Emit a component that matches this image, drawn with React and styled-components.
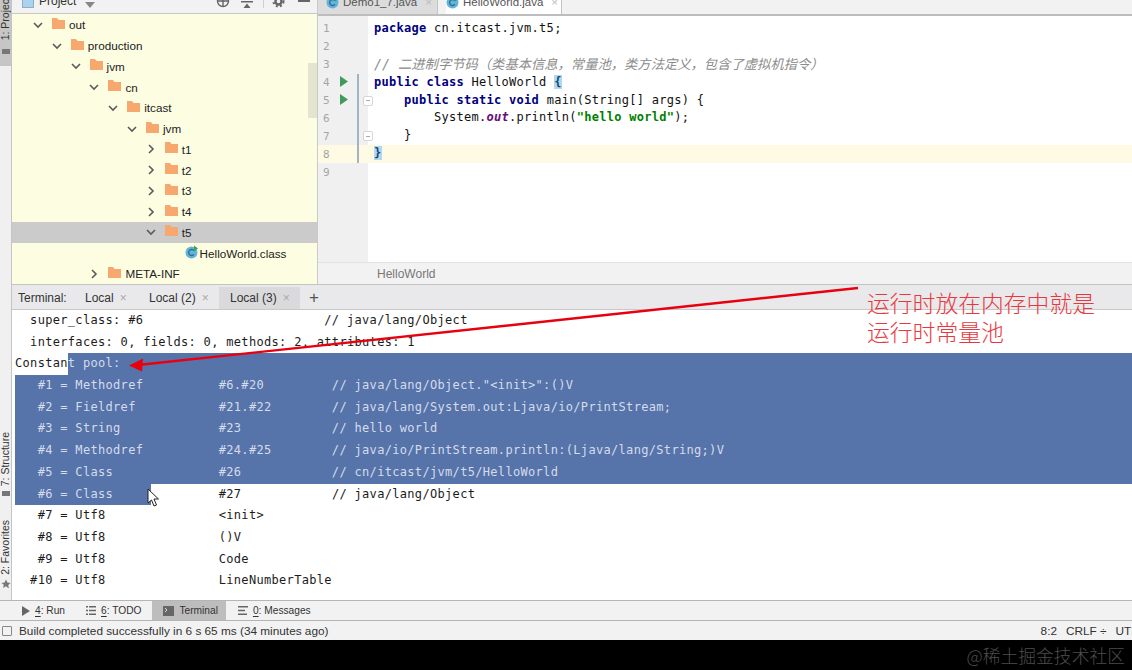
import React from 'react';
import styled, { createGlobalStyle } from 'styled-components';

const GlobalStyle = createGlobalStyle`
  html, body { margin: 0; padding: 0; background: #000; overflow: hidden; }
  * { box-sizing: border-box; }
`;

const uiFont = `"Liberation Sans", Arial, sans-serif`;
const monoFont = `"DejaVu Sans Mono", "Noto Sans CJK SC", monospace`;

const Page = styled.div`
  position: relative;
  width: 1132px;
  height: 670px;
  overflow: hidden;
  display: flex;
  flex-direction: column;
  font-family: ${uiFont};
  color: #222;
`;

const Workspace = styled.div`
  display: flex;
  height: 600px;
  background: #f2f2f2;
`;

const Stripe = styled.div`
  width: 12px;
  flex: none;
  display: flex;
  flex-direction: column;
  align-items: center;
  background: #f0f0f0;
  border-right: 1px solid #c4c4c4;
  font-size: 10.5px;
  color: #333;
  overflow: hidden;
`;

const StripeButton = styled.div`
  display: flex;
  flex-direction: column;
  align-items: center;
  width: 100%;
  height: ${(p) => p.$h}px;
  margin-top: ${(p) => p.$top || 0}px;
  justify-content: flex-end;
  background: ${(p) => (p.$active ? '#c6c6c6' : 'transparent')};
  padding-bottom: ${(p) => p.$pad || 0}px;
`;

const VerticalLabel = styled.span`
  writing-mode: vertical-rl;
  transform: rotate(180deg);
  white-space: nowrap;
  line-height: 11px;
`;

const StripeDot = styled.span`
  width: 8px;
  height: 5px;
  margin-top: ${(p) => p.$gap || 5}px;
  background: #777;
  flex: none;
`;

const Main = styled.div`
  flex: 1;
  min-width: 0;
  display: flex;
  flex-direction: column;
`;

const TopArea = styled.div`
  display: flex;
  height: 284px;
`;

const ProjectPanel = styled.div`
  position: relative;
  width: 306px;
  flex: none;
  display: flex;
  flex-direction: column;
  background: #fdfde2;
  border-right: 1px solid #c9c9c9;
`;

const PanelHeader = styled.div`
  height: 14px;
  flex: none;
  display: flex;
  align-items: flex-end;
  background: #f2f2f2;
  border-bottom: 1px solid #c8c8c8;
  padding: 0 0 5px 10px;
  overflow: hidden;
  font-size: 12px;
`;

const HeaderLabel = styled.span`
  margin-left: 5px;
  line-height: 14px;
  color: #333;
`;

const HeaderCaret = styled.svg`
  margin-left: 9px;
`;

const HeaderTools = styled.div`
  display: flex;
  align-items: flex-end;
  margin-left: auto;
  padding-right: 7px;
`;

const HeaderIcon = styled.svg`
  margin-left: ${(p) => p.$ml || 0}px;
  flex: none;
`;

const HeaderDivider = styled.span`
  width: 1px;
  height: 14px;
  margin-left: 10px;
  background: #cfcfcf;
`;

const Tree = styled.div`
  padding-top: 0.6px;
  font-size: 11.7px;
`;

const TreeRow = styled.div`
  height: 20.75px;
  display: flex;
  align-items: center;
  padding-left: ${(p) => 20 + p.$level * 18.8}px;
  background: ${(p) => (p.$selected ? '#cbcbcb' : 'transparent')};
  color: #222;
`;

const Chevron = styled.svg`
  width: 12px;
  height: 12px;
  margin-right: 8px;
  flex: none;
`;

const LeafGap = styled.span`
  width: 21px;
  flex: none;
`;

const FolderIcon = styled.svg`
  width: 13px;
  height: 11px;
  margin-right: 4px;
  margin-top: -3px;
  flex: none;
`;

const Thumb = styled.div`
  position: absolute;
  top: 63px;
  right: 0;
  width: 9px;
  height: 55px;
  background: #e5e5cf;
`;

const Editor = styled.div`
  flex: 1;
  min-width: 0;
  display: flex;
  flex-direction: column;
  background: #fff;
`;

const TabBar = styled.div`
  height: 16px;
  flex: none;
  display: flex;
  align-items: flex-end;
  background: #f2f2f2;
  border-bottom: 2px solid #bdbdbd;
  overflow: hidden;
  font-size: 11.5px;
`;

const EditorTab = styled.div`
  height: 14px;
  width: ${(p) => p.$w}px;
  margin-left: ${(p) => p.$gap || 0}px;
  display: flex;
  align-items: flex-end;
  padding: 0 0 5px ${(p) => p.$pad}px;
  flex: none;
  color: #555;
  background: ${(p) => (p.$active ? '#fff' : '#dcdcdc')};
  border-right: 1px solid #c4c4c4;
`;

const TabName = styled.span`
  margin-left: 2px;
  line-height: 14px;
  white-space: nowrap;
`;

const TabClose = styled.span`
  margin-left: 8px;
  line-height: 14px;
  color: #bbb;
`;

const CodeArea = styled.div`
  flex: 1;
  display: flex;
  flex-direction: column;
  padding-top: 4px;
  background: linear-gradient(to right, #f0f0f0 50px, #fff 50px);
`;

const CodeRow = styled.div`
  height: 17.9px;
  display: flex;
  background: ${(p) => (p.$current ? '#fffae3' : 'transparent')};
`;

const Gutter = styled.div`
  position: relative;
  width: 50px;
  flex: none;
  display: flex;
  align-items: center;
  font: 11px ${monoFont};
  color: #a5a5a5;
  padding-left: 5px;
`;

const RunMark = styled.svg`
  position: absolute;
  left: 21px;
  top: 2px;
  width: 10px;
  height: 11px;
`;

const ChangeBar = styled.span`
  position: absolute;
  left: 39px;
  top: 0;
  bottom: 0;
  width: 2px;
  background: #a4b3c4;
`;

const FoldMark = styled.span`
  position: absolute;
  left: 45px;
  top: 4px;
  width: 10px;
  height: 10px;
  border: 1px solid #d6d6d6;
  border-radius: 2px;
  background: #fff;
  &::after {
    content: '';
    position: absolute;
    left: 2px;
    right: 2px;
    top: 3.5px;
    height: 1px;
    background: #aaa;
  }
`;

const Code = styled.pre`
  margin: 0;
  padding-left: 6px;
  font: 12px/17.9px ${monoFont};
  letter-spacing: 0.28px;
  color: #111;
`;

const Keyword = styled.b`
  color: #000080;
`;

const Comment = styled.i`
  color: #8c8c8c;
  font-size: 13.3px;
  letter-spacing: 0;
`;

const StaticField = styled.i`
  color: #660e7a;
  font-weight: bold;
`;

const Str = styled.b`
  color: #008000;
`;

const Brace = styled.span`
  background: #b4d7ee;
  font-weight: bold;
  color: #0b4a78;
`;

const Breadcrumb = styled.div`
  height: 22px;
  flex: none;
  display: flex;
  align-items: center;
  padding-left: 59px;
  background: #f2f2f2;
  border-top: 1px solid #e2e2e2;
  font-size: 12px;
  color: #777;
`;

const TerminalTabs = styled.div`
  height: 26px;
  flex: none;
  display: flex;
  align-items: stretch;
  padding-top: 2px;
  border-top: 1px solid #c4c4c4;
  border-bottom: 1px solid #c8c8c8;
  background: #e9e9ec;
  font-size: 12px;
  color: #333;
`;

const TerminalTitle = styled.span`
  display: flex;
  align-items: center;
  width: 62px;
  margin-left: 6px;
`;

const TerminalTab = styled.span`
  display: flex;
  align-items: center;
  width: ${(p) => p.$w}px;
  padding-left: ${(p) => p.$pad}px;
  background: ${(p) => (p.$active ? '#dadadd' : 'transparent')};
`;

const TabX = styled.span`
  margin-left: 6px;
  color: #aaa;
`;

const AddTab = styled.span`
  display: flex;
  align-items: center;
  margin-left: 9px;
  font-size: 17px;
  color: #555;
`;

const TerminalBody = styled.div`
  flex: 1;
  background: #fff;
  padding-left: 3px;
  overflow: hidden;
  font: 12px/21.7px ${monoFont};
  letter-spacing: 0.32px;
  color: #1c1c1c;
`;

const TermLine = styled.div`
  height: 21.7px;
  display: flex;
  white-space: pre;
`;

const Selected = styled.span`
  background: #5673aa;
  color: #d5dcea;
  flex: ${(p) => (p.$fill ? 1 : 'none')};
`;

const ToolBar = styled.div`
  height: 21px;
  flex: none;
  display: flex;
  align-items: stretch;
  padding-left: 12px;
  background: #f2f2f2;
  border-top: 1px solid #b5b5b5;
  border-bottom: 1px solid #b5b5b5;
  font-size: 10.2px;
  color: #333;
`;

const ToolItem = styled.div`
  display: flex;
  align-items: center;
  gap: 5px;
  padding: 0 ${(p) => p.$pad || 8}px 0 ${(p) => p.$left || 10}px;
  background: ${(p) => (p.$active ? '#bdbdbd' : 'transparent')};
  margin-left: ${(p) => p.$gap || 0}px;
`;

const Mnemonic = styled.u`
  text-underline-offset: 2px;
`;

const StatusBar = styled.div`
  height: 19px;
  flex: none;
  display: flex;
  align-items: center;
  padding-left: 2px;
  background: #f2f2f2;
  font-size: 11.8px;
  color: #333;
  overflow: hidden;
`;

const StatusBox = styled.span`
  width: 10px;
  height: 10px;
  border: 1px solid #888;
  border-radius: 1px;
  margin-right: 7px;
  flex: none;
`;

const StatusRight = styled.div`
  display: flex;
  margin-left: auto;
  margin-right: -17px;
  gap: 9px;
  white-space: nowrap;
`;

const Footer = styled.div`
  flex: 1;
  display: flex;
  justify-content: flex-end;
  align-items: center;
  padding-right: 7px;
  background: #000;
`;

const Watermark = styled.span`
  font: 17.8px "Noto Sans CJK SC", sans-serif;
  font-weight: 300;
  color: #4d4d4d;
`;

const ArrowLayer = styled.svg`
  position: absolute;
  left: 0;
  top: 0;
  pointer-events: none;
`;

const Note = styled.div`
  position: absolute;
  left: 867px;
  top: 288px;
  font: 300 22.8px/29px "Noto Sans CJK SC", sans-serif;
  color: #e8383d;
  white-space: pre;
`;

const Cursor = styled.svg`
  position: absolute;
  left: 147px;
  top: 488px;
`;

const ClassIcon = () => (
  <svg width="14" height="14" viewBox="0 0 14 14" style={{ flex: 'none', marginRight: 1, marginTop: -3 }}>
    <circle cx="6.5" cy="7.5" r="6" fill="#60b5de" />
    <path d="M9 5.6a3 3 0 1 0 0 3.8" fill="none" stroke="#3a6c8c" strokeWidth="1.4" />
    <path d="M9 0.5l4 3-4 3z" fill="#3fa34d" />
  </svg>
);

const treeRows = [
  { name: 'out', level: 0, open: true },
  { name: 'production', level: 1, open: true },
  { name: 'jvm', level: 2, open: true },
  { name: 'cn', level: 3, open: true },
  { name: 'itcast', level: 4, open: true },
  { name: 'jvm', level: 5, open: true },
  { name: 't1', level: 6 },
  { name: 't2', level: 6 },
  { name: 't3', level: 6 },
  { name: 't4', level: 6 },
  { name: 't5', level: 6, open: true, selected: true },
  { name: 'HelloWorld.class', level: 7, file: true },
  { name: 'META-INF', level: 3 },
];

const TreeItem = ({ row }) => (
  <TreeRow $level={row.level} $selected={row.selected}>
    {row.file ? (
      <>
        <LeafGap />
        <ClassIcon />
      </>
    ) : (
      <>
        <Chevron viewBox="0 0 12 12" fill="none" stroke="#5a5a5a" strokeWidth="1.6">
          <path d={row.open ? 'M2 4l4 4 4-4' : 'M4 2l4 4-4 4'} />
        </Chevron>
        <FolderIcon viewBox="0 0 13 11">
          <path d="M0 0h5l1.5 2H13v9H0z" fill="#f6a86e" />
        </FolderIcon>
      </>
    )}
    <span>{row.name}</span>
  </TreeRow>
);

const RunIcon = () => (
  <RunMark viewBox="0 0 10 11">
    <path d="M1 0l8 5.5L1 11z" fill="#3f9a5b" />
  </RunMark>
);

const codeLines = [
  { code: <><Keyword>package</Keyword> cn.itcast.jvm.t5;</> },
  { code: '' },
  { code: <Comment>{'// 二进制字节码（类基本信息，常量池，类方法定义，包含了虚拟机指令）'}</Comment> },
  { run: true, bar: true, code: <><Keyword>public class</Keyword> HelloWorld <Brace>{'{'}</Brace></> },
  { run: true, bar: true, fold: true, code: <>    <Keyword>public static void</Keyword> main(String[] args) {'{'}</> },
  { bar: true, code: <>        System.<StaticField>out</StaticField>.println(<Str>"hello world"</Str>);</> },
  { bar: true, fold: true, code: '    }' },
  { bar: true, current: true, code: <Brace>{'}'}</Brace> },
  { code: '' },
];

// javap output, the columns are plain spaces as in the real terminal
const plainBefore = [
  '  super_class: #6                        // java/lang/Object',
  '  interfaces: 0, fields: 0, methods: 2, attributes: 1',
];

const selectedLines = [
  '   #1 = Methodref          #6.#20         // java/lang/Object."<init>":()V',
  '   #2 = Fieldref           #21.#22        // java/lang/System.out:Ljava/io/PrintStream;',
  '   #3 = String             #23            // hello world',
  '   #4 = Methodref          #24.#25        // java/io/PrintStream.println:(Ljava/lang/String;)V',
  '   #5 = Class              #26            // cn/itcast/jvm/t5/HelloWorld',
];

const plainAfter = [
  '   #7 = Utf8               <init>',
  '   #8 = Utf8               ()V',
  '   #9 = Utf8               Code',
  '  #10 = Utf8               LineNumberTable',
];

export default function App() {
  return (
    <Page>
      <GlobalStyle />
      <Workspace>
        <Stripe>
          <StripeButton $active $h={66} $pad={12}>
            <VerticalLabel>1: Project</VerticalLabel>
            <StripeDot $gap={9} />
          </StripeButton>
          <StripeButton $h={74} $top={356}>
            <VerticalLabel>7: Structure</VerticalLabel>
            <StripeDot />
          </StripeButton>
          <StripeButton $h={70} $top={23}>
            <VerticalLabel>2: Favorites</VerticalLabel>
            <svg width="10" height="10" viewBox="0 0 24 24" style={{ marginTop: 4 }}>
              <path d="M12 1l3.4 7.3 7.6 1-5.6 5.3 1.5 7.9L12 17.6l-6.9 3.9 1.5-7.9L1 9.3l7.6-1z" fill="#777" />
            </svg>
          </StripeButton>
        </Stripe>
        <Main>
          <TopArea>
            <ProjectPanel>
              <PanelHeader>
                <svg width="12" height="12" viewBox="0 0 12 12">
                  <rect x="0.5" y="0.5" width="11" height="11" fill="#a9d3f2" stroke="#9ab" />
                </svg>
                <HeaderLabel>Project</HeaderLabel>
                <HeaderCaret width="10" height="6" viewBox="0 0 10 6">
                  <path d="M0 0h10L5 6z" fill="#888" />
                </HeaderCaret>
                <HeaderTools>
                  <HeaderIcon width="14" height="14" viewBox="0 0 14 14" fill="none" stroke="#666" strokeWidth="1.4">
                    <circle cx="7" cy="7" r="5.5" />
                    <path d="M7 1v12M1 7h12" />
                  </HeaderIcon>
                  <HeaderIcon $ml={11} width="12" height="12" viewBox="0 0 12 12" fill="#666">
                    <path d="M0 5h12v1.5H0zM6 7.5l3.5 4.5h-7z" />
                  </HeaderIcon>
                  <HeaderDivider />
                  <HeaderIcon $ml={8} width="13" height="13" viewBox="0 0 13 13" fill="none" stroke="#666">
                    <circle cx="6.5" cy="6.5" r="3" strokeWidth="2.4" />
                    <circle cx="6.5" cy="6.5" r="5" strokeWidth="2" strokeDasharray="2 2.2" />
                  </HeaderIcon>
                  <HeaderIcon $ml={13} width="12" height="12" viewBox="0 0 12 12" fill="#666">
                    <rect x="0" y="4" width="12" height="2" />
                  </HeaderIcon>
                </HeaderTools>
              </PanelHeader>
              <Tree>
                {treeRows.map((row, index) => (
                  <TreeItem key={index} row={row} />
                ))}
              </Tree>
              <Thumb />
            </ProjectPanel>
            <Editor>
              <TabBar>
                <EditorTab $w={120} $pad={8}>
                  <ClassIcon />
                  <TabName>Demo1_7.java</TabName>
                  <TabClose>×</TabClose>
                </EditorTab>
                <EditorTab $w={116} $gap={8} $active $pad={0}>
                  <ClassIcon />
                  <TabName>HelloWorld.java</TabName>
                  <TabClose>×</TabClose>
                </EditorTab>
              </TabBar>
              <CodeArea>
                {codeLines.map((line, index) => (
                  <CodeRow key={index} $current={line.current}>
                    <Gutter>
                      {index + 1}
                      {line.run && <RunIcon />}
                      {line.bar && <ChangeBar />}
                      {line.fold && <FoldMark />}
                    </Gutter>
                    <Code>{line.code}</Code>
                  </CodeRow>
                ))}
              </CodeArea>
              <Breadcrumb>HelloWorld</Breadcrumb>
            </Editor>
          </TopArea>
          <TerminalTabs>
            <TerminalTitle>Terminal:</TerminalTitle>
            <TerminalTab $w={64} $pad={5}>Local<TabX>×</TabX></TerminalTab>
            <TerminalTab $w={75} $pad={5}>Local (2)<TabX>×</TabX></TerminalTab>
            <TerminalTab $w={81} $pad={11} $active>Local (3)<TabX>×</TabX></TerminalTab>
            <AddTab>+</AddTab>
          </TerminalTabs>
          <TerminalBody>
            {plainBefore.map((text) => (
              <TermLine key={text}>{text}</TermLine>
            ))}
            <TermLine>
              Constan
              <Selected $fill>t pool:</Selected>
            </TermLine>
            {selectedLines.map((text) => (
              <TermLine key={text}>
                <Selected $fill>{text}</Selected>
              </TermLine>
            ))}
            <TermLine>
              <Selected>{'   #6 = Class     '}</Selected>
              {'         #27            // java/lang/Object'}
            </TermLine>
            {plainAfter.map((text) => (
              <TermLine key={text}>{text}</TermLine>
            ))}
          </TerminalBody>
        </Main>
      </Workspace>
      <ToolBar>
        <ToolItem $pad={11}>
          <svg width="8" height="10" viewBox="0 0 8 10"><path d="M0 0l8 5-8 5z" fill="#666" /></svg>
          <span><Mnemonic>4</Mnemonic>: Run</span>
        </ToolItem>
        <ToolItem $pad={11}>
          <svg width="10" height="9" viewBox="0 0 10 9" fill="#666">
            <path d="M0 0h2v1.5H0zM3 0h7v1.5H3zM0 3.7h2v1.5H0zM3 3.7h7v1.5H3zM0 7.5h2V9H0zM3 7.5h7V9H3z" />
          </svg>
          <span><Mnemonic>6</Mnemonic>: TODO</span>
        </ToolItem>
        <ToolItem $active $left={11} $pad={8}>
          <svg width="11" height="10" viewBox="0 0 11 10">
            <rect width="11" height="10" fill="#666" />
            <path d="M2 2l2 2-2 2" fill="none" stroke="#ddd" />
          </svg>
          <span>Terminal</span>
        </ToolItem>
        <ToolItem $gap={2}>
          <svg width="10" height="9" viewBox="0 0 10 9" fill="#666">
            <path d="M0 0h10v1.5H0zM0 3.7h7v1.5H0zM0 7.5h9V9H0z" />
          </svg>
          <span><Mnemonic>0</Mnemonic>: Messages</span>
        </ToolItem>
      </ToolBar>
      <StatusBar>
        <StatusBox />
        Build completed successfully in 6 s 65 ms (34 minutes ago)
        <StatusRight>
          <span>8:2</span>
          <span>CRLF ÷</span>
          <span>UTF-8</span>
        </StatusRight>
      </StatusBar>
      <Footer>
        <Watermark>@稀土掘金技术社区</Watermark>
      </Footer>
      <ArrowLayer width="1132" height="670" viewBox="0 0 1132 670">
        <path d="M858 288L138 365" stroke="#e8000f" strokeWidth="2.4" fill="none" />
        <path d="M129 365.5L143 358.5L142 371.5z" fill="#e8000f" />
      </ArrowLayer>
      <Note>{'运行时放在内存中就是\n运行时常量池'}</Note>
      <Cursor width="14" height="20" viewBox="0 0 14 20">
        <path d="M1 1v14l3.5-3 2.5 6 2.5-1-2.5-6h4.5z" fill="#fff" stroke="#222" strokeWidth="1" />
      </Cursor>
    </Page>
  );
}
